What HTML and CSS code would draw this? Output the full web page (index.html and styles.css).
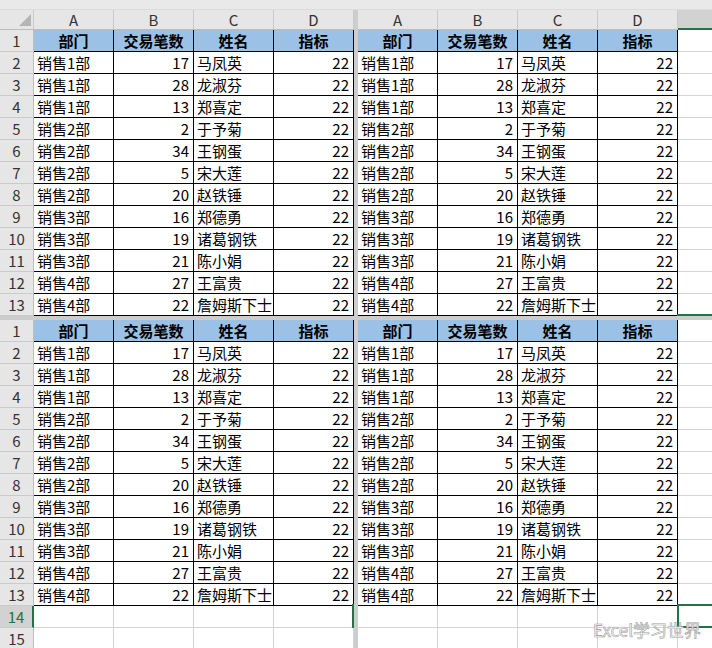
FILE: index.html
```html
<!DOCTYPE html>
<html lang="zh-CN">
<head>
<meta charset="utf-8">
<title>Excel</title>
<link rel="stylesheet" href="styles.css">
</head>
<body>
<div class="strip"></div>
<div class="sheet">
  <div class="pane l top">
    <div class="c ch corner"></div><div class="c ch">A</div><div class="c ch">B</div><div class="c ch">C</div><div class="c ch">D</div>
    <div class="c rh">1</div><div class="c t h">部门</div><div class="c t h">交易笔数</div><div class="c t h">姓名</div><div class="c t h">指标</div>
    <div class="c rh">2</div><div class="c t">销售1部</div><div class="c t n">17</div><div class="c t">马凤英</div><div class="c t n">22</div>
    <div class="c rh">3</div><div class="c t">销售1部</div><div class="c t n">28</div><div class="c t">龙淑芬</div><div class="c t n">22</div>
    <div class="c rh">4</div><div class="c t">销售1部</div><div class="c t n">13</div><div class="c t">郑喜定</div><div class="c t n">22</div>
    <div class="c rh">5</div><div class="c t">销售2部</div><div class="c t n">2</div><div class="c t">于予菊</div><div class="c t n">22</div>
    <div class="c rh">6</div><div class="c t">销售2部</div><div class="c t n">34</div><div class="c t">王钢蛋</div><div class="c t n">22</div>
    <div class="c rh">7</div><div class="c t">销售2部</div><div class="c t n">5</div><div class="c t">宋大莲</div><div class="c t n">22</div>
    <div class="c rh">8</div><div class="c t">销售2部</div><div class="c t n">20</div><div class="c t">赵铁锤</div><div class="c t n">22</div>
    <div class="c rh">9</div><div class="c t">销售3部</div><div class="c t n">16</div><div class="c t">郑德勇</div><div class="c t n">22</div>
    <div class="c rh">10</div><div class="c t">销售3部</div><div class="c t n">19</div><div class="c t">诸葛钢铁</div><div class="c t n">22</div>
    <div class="c rh">11</div><div class="c t">销售3部</div><div class="c t n">21</div><div class="c t">陈小娟</div><div class="c t n">22</div>
    <div class="c rh">12</div><div class="c t">销售4部</div><div class="c t n">27</div><div class="c t">王富贵</div><div class="c t n">22</div>
    <div class="c rh">13</div><div class="c t">销售4部</div><div class="c t n">22</div><div class="c t">詹姆斯下士</div><div class="c t n">22</div>
  </div>
  <div class="vbar"></div>
  <div class="pane r top">
    <div class="c ch">A</div><div class="c ch">B</div><div class="c ch">C</div><div class="c ch">D</div><div class="c ch sel"></div>
    <div class="c t h">部门</div><div class="c t h">交易笔数</div><div class="c t h">姓名</div><div class="c t h">指标</div><div class="c"></div>
    <div class="c t">销售1部</div><div class="c t n">17</div><div class="c t">马凤英</div><div class="c t n">22</div><div class="c"></div>
    <div class="c t">销售1部</div><div class="c t n">28</div><div class="c t">龙淑芬</div><div class="c t n">22</div><div class="c"></div>
    <div class="c t">销售1部</div><div class="c t n">13</div><div class="c t">郑喜定</div><div class="c t n">22</div><div class="c"></div>
    <div class="c t">销售2部</div><div class="c t n">2</div><div class="c t">于予菊</div><div class="c t n">22</div><div class="c"></div>
    <div class="c t">销售2部</div><div class="c t n">34</div><div class="c t">王钢蛋</div><div class="c t n">22</div><div class="c"></div>
    <div class="c t">销售2部</div><div class="c t n">5</div><div class="c t">宋大莲</div><div class="c t n">22</div><div class="c"></div>
    <div class="c t">销售2部</div><div class="c t n">20</div><div class="c t">赵铁锤</div><div class="c t n">22</div><div class="c"></div>
    <div class="c t">销售3部</div><div class="c t n">16</div><div class="c t">郑德勇</div><div class="c t n">22</div><div class="c"></div>
    <div class="c t">销售3部</div><div class="c t n">19</div><div class="c t">诸葛钢铁</div><div class="c t n">22</div><div class="c"></div>
    <div class="c t">销售3部</div><div class="c t n">21</div><div class="c t">陈小娟</div><div class="c t n">22</div><div class="c"></div>
    <div class="c t">销售4部</div><div class="c t n">27</div><div class="c t">王富贵</div><div class="c t n">22</div><div class="c"></div>
    <div class="c t">销售4部</div><div class="c t n">22</div><div class="c t">詹姆斯下士</div><div class="c t n">22</div><div class="c"></div>
  </div>
  <div class="hbar"></div>
  <div class="pane l">
    <div class="c rh">1</div><div class="c t h">部门</div><div class="c t h">交易笔数</div><div class="c t h">姓名</div><div class="c t h">指标</div>
    <div class="c rh">2</div><div class="c t">销售1部</div><div class="c t n">17</div><div class="c t">马凤英</div><div class="c t n">22</div>
    <div class="c rh">3</div><div class="c t">销售1部</div><div class="c t n">28</div><div class="c t">龙淑芬</div><div class="c t n">22</div>
    <div class="c rh">4</div><div class="c t">销售1部</div><div class="c t n">13</div><div class="c t">郑喜定</div><div class="c t n">22</div>
    <div class="c rh">5</div><div class="c t">销售2部</div><div class="c t n">2</div><div class="c t">于予菊</div><div class="c t n">22</div>
    <div class="c rh">6</div><div class="c t">销售2部</div><div class="c t n">34</div><div class="c t">王钢蛋</div><div class="c t n">22</div>
    <div class="c rh">7</div><div class="c t">销售2部</div><div class="c t n">5</div><div class="c t">宋大莲</div><div class="c t n">22</div>
    <div class="c rh">8</div><div class="c t">销售2部</div><div class="c t n">20</div><div class="c t">赵铁锤</div><div class="c t n">22</div>
    <div class="c rh">9</div><div class="c t">销售3部</div><div class="c t n">16</div><div class="c t">郑德勇</div><div class="c t n">22</div>
    <div class="c rh">10</div><div class="c t">销售3部</div><div class="c t n">19</div><div class="c t">诸葛钢铁</div><div class="c t n">22</div>
    <div class="c rh">11</div><div class="c t">销售3部</div><div class="c t n">21</div><div class="c t">陈小娟</div><div class="c t n">22</div>
    <div class="c rh">12</div><div class="c t">销售4部</div><div class="c t n">27</div><div class="c t">王富贵</div><div class="c t n">22</div>
    <div class="c rh">13</div><div class="c t">销售4部</div><div class="c t n">22</div><div class="c t">詹姆斯下士</div><div class="c t n">22</div>
    <div class="c rh sel">14</div><div class="c"></div><div class="c"></div><div class="c"></div><div class="c"></div>
    <div class="c rh">15</div><div class="c"></div><div class="c"></div><div class="c"></div><div class="c"></div>
  </div>
  <div class="vbar"></div>
  <div class="pane r">
    <div class="c t h">部门</div><div class="c t h">交易笔数</div><div class="c t h">姓名</div><div class="c t h">指标</div><div class="c"></div>
    <div class="c t">销售1部</div><div class="c t n">17</div><div class="c t">马凤英</div><div class="c t n">22</div><div class="c"></div>
    <div class="c t">销售1部</div><div class="c t n">28</div><div class="c t">龙淑芬</div><div class="c t n">22</div><div class="c"></div>
    <div class="c t">销售1部</div><div class="c t n">13</div><div class="c t">郑喜定</div><div class="c t n">22</div><div class="c"></div>
    <div class="c t">销售2部</div><div class="c t n">2</div><div class="c t">于予菊</div><div class="c t n">22</div><div class="c"></div>
    <div class="c t">销售2部</div><div class="c t n">34</div><div class="c t">王钢蛋</div><div class="c t n">22</div><div class="c"></div>
    <div class="c t">销售2部</div><div class="c t n">5</div><div class="c t">宋大莲</div><div class="c t n">22</div><div class="c"></div>
    <div class="c t">销售2部</div><div class="c t n">20</div><div class="c t">赵铁锤</div><div class="c t n">22</div><div class="c"></div>
    <div class="c t">销售3部</div><div class="c t n">16</div><div class="c t">郑德勇</div><div class="c t n">22</div><div class="c"></div>
    <div class="c t">销售3部</div><div class="c t n">19</div><div class="c t">诸葛钢铁</div><div class="c t n">22</div><div class="c"></div>
    <div class="c t">销售3部</div><div class="c t n">21</div><div class="c t">陈小娟</div><div class="c t n">22</div><div class="c"></div>
    <div class="c t">销售4部</div><div class="c t n">27</div><div class="c t">王富贵</div><div class="c t n">22</div><div class="c"></div>
    <div class="c t">销售4部</div><div class="c t n">22</div><div class="c t">詹姆斯下士</div><div class="c t n">22</div><div class="c"></div>
    <div class="c"></div><div class="c"></div><div class="c"></div><div class="c"></div><div class="c"></div>
    <div class="c"></div><div class="c"></div><div class="c"></div><div class="c"></div><div class="c"></div>
  </div>
</div>
<div class="selbox"></div>
<div class="selline-left"></div>
<div class="selline-top"></div>
<div class="watermark">Excel学习世界</div>
</body>
</html>
```
FILE: styles.css
```css
* { box-sizing: border-box; }
html, body { margin: 0; padding: 0; }
body {
  width: 712px;
  height: 648px;
  overflow: hidden;
  background: #ffffff;
  position: relative;
  font-family: "Noto Sans CJK SC", sans-serif;
  color: #000;
}
.strip {
  height: 10px;
  background: #e9e9e9;
  border-bottom: 1px solid #dcdcdc;
}
.sheet {
  display: grid;
  grid-template-columns: 354px 4px 354px;
  grid-template-rows: 306px 4px 328px;
}
.vbar { background: #cdcdcd; }
.hbar { grid-column: 1 / -1; background: #cdcdcd; }
.pane {
  display: grid;
  overflow: hidden;
  grid-auto-rows: 22px;
  align-content: start;
}
.pane.l { grid-template-columns: 34px repeat(4, 80px); }
.pane.r { grid-template-columns: repeat(5, 80px); }
.pane.top { grid-template-rows: 20px; }
.c {
  border-right: 1px solid #d4d4d4;
  border-bottom: 1px solid #d4d4d4;
  font-size: 15px;
  line-height: 21px;
  padding: 0 4px 0 3px;
  white-space: nowrap;
  overflow: hidden;
}
.ch {
  background: #e6e6e6;
  border-right-color: #cacaca;
  border-bottom-color: #bdbdbd;
  text-align: center;
  color: #333;
  line-height: 19px;
  padding: 0;
}
.ch.sel {
  background: #d2d2d2;
  border-bottom: 2px solid #217346;
}
.corner { position: relative; }
.corner::after {
  content: "";
  position: absolute;
  right: 2px;
  bottom: 3px;
  width: 12px;
  height: 12px;
  background: #b5b5b5;
  clip-path: polygon(100% 0, 100% 100%, 0 100%);
}
.rh {
  background: #e6e6e6;
  border-right-color: #bdbdbd;
  border-bottom-color: #cacaca;
  text-align: center;
  color: #333;
  padding: 0;
}
.rh.sel {
  background: #d2d2d2;
  color: #217346;
  border-right: 2px solid #217346;
}
.t { border-right-color: #000; border-bottom-color: #000; }
.h { background: #9bc2e6; font-weight: bold; text-align: center; padding: 0; }
.n { text-align: right; }
.selbox {
  position: absolute;
  left: 677px;
  top: 604px;
  width: 60px;
  height: 24px;
  border: 2px solid #217346;
}
.selline-left {
  position: absolute;
  left: 352px;
  top: 604px;
  width: 2px;
  height: 24px;
  background: #217346;
}
.selline-top {
  position: absolute;
  left: 677px;
  top: 314px;
  width: 35px;
  height: 2px;
  background: #217346;
}
.watermark {
  position: absolute;
  left: 593px;
  top: 618px;
  font-size: 17px;
  line-height: 24px;
  color: #ffffff;
  -webkit-text-stroke: 0.6px #9a9a9a;
  font-family: "Noto Sans CJK SC", sans-serif;
  white-space: nowrap;
}
```
